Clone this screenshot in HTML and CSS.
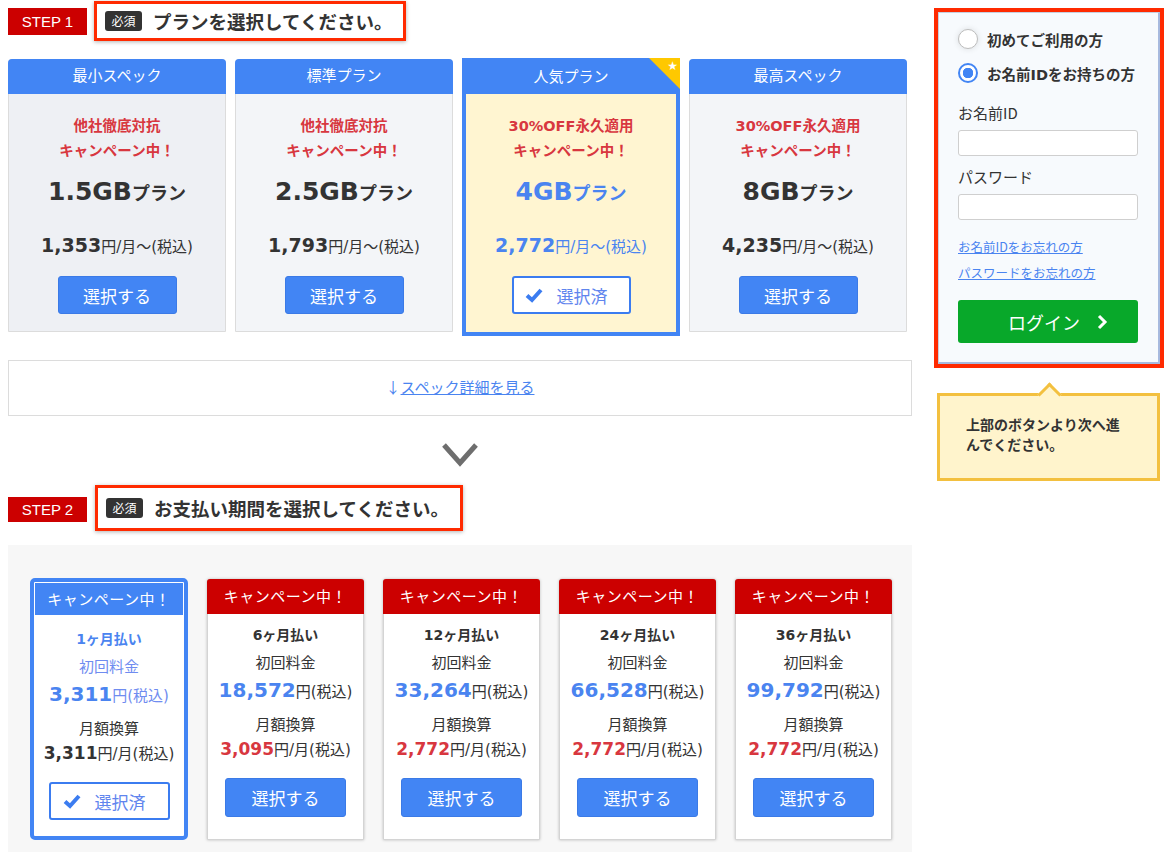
FILE: index.html
```html
<!DOCTYPE html>
<html lang="ja">
<head>
    <meta charset="UTF-8">
    <meta name="viewport" content="width=device-width, initial-scale=1.0">
    <title>プラン選択</title>
    <link rel="stylesheet" href="styles.css">
</head>
<body>
<div class="page">
    <div class="main">
        <!-- STEP 1 -->
        <div class="step-head">
            <div class="step-label">STEP 1</div>
            <div class="step-title"><span class="badge">必須</span>プランを選択してください。</div>
        </div>

        <div class="plans">
            <div class="plan">
                <div class="plan-head">最小スペック</div>
                <div class="plan-body">
                    <p class="plan-camp">他社徹底対抗<br>キャンペーン中！</p>
                    <p class="plan-name"><span class="gb">1.5GB</span>プラン</p>
                    <p class="plan-price"><b>1,353</b>円/月～(税込)</p>
                    <button class="btn-select">選択する</button>
                </div>
            </div>
            <div class="plan plan-dots">
                <div class="plan-head">標準プラン</div>
                <div class="plan-body">
                    <p class="plan-camp">他社徹底対抗<br>キャンペーン中！</p>
                    <p class="plan-name"><span class="gb">2.5GB</span>プラン</p>
                    <p class="plan-price"><b>1,793</b>円/月～(税込)</p>
                    <button class="btn-select">選択する</button>
                </div>
            </div>
            <div class="plan plan-active">
                <div class="plan-head">人気プラン</div>
                <div class="corner"><span>★</span></div>
                <div class="plan-body">
                    <p class="plan-camp">30%OFF永久適用<br>キャンペーン中！</p>
                    <p class="plan-name"><span class="gb">4GB</span>プラン</p>
                    <p class="plan-price"><b>2,772</b>円/月～(税込)</p>
                    <button class="btn-selected">
                        <svg width="18" height="16" viewBox="0 0 18 16"><path d="M2 8.5 L7 13 L16 3" fill="none" stroke="#3b7cf0" stroke-width="4"/></svg>
                        選択済
                    </button>
                </div>
            </div>
            <div class="plan plan-dots">
                <div class="plan-head">最高スペック</div>
                <div class="plan-body">
                    <p class="plan-camp">30%OFF永久適用<br>キャンペーン中！</p>
                    <p class="plan-name"><span class="gb">8GB</span>プラン</p>
                    <p class="plan-price"><b>4,235</b>円/月～(税込)</p>
                    <button class="btn-select">選択する</button>
                </div>
            </div>
        </div>

        <div class="spec-box">
            <a href="#" class="spec-link"><span class="arrow">↓</span><u>スペック詳細を見る</u></a>
        </div>

        <div class="next-arrow">
            <svg width="36" height="24" viewBox="0 0 36 24"><polyline points="2,2 18,20 34,2" fill="none" stroke="#6e6e6e" stroke-width="5"/></svg>
        </div>

        <!-- STEP 2 -->
        <div class="step-head step-head-2">
            <div class="step-label">STEP 2</div>
            <div class="step-title"><span class="badge">必須</span>お支払い期間を選択してください。</div>
        </div>

        <div class="terms">
            <div class="term term-active">
                <div class="term-head">キャンペーン中！</div>
                <div class="term-body">
                    <p class="term-name">1ヶ月払い</p>
                    <p class="term-label">初回料金</p>
                    <p class="term-first"><b>3,311</b>円(税込)</p>
                    <p class="term-label">月額換算</p>
                    <p class="term-month"><b>3,311</b>円/月(税込)</p>
                    <button class="btn-selected">
                        <svg width="18" height="16" viewBox="0 0 18 16"><path d="M2 8.5 L7 13 L16 3" fill="none" stroke="#3b7cf0" stroke-width="4"/></svg>
                        選択済
                    </button>
                </div>
            </div>
            <div class="term">
                <div class="term-head">キャンペーン中！</div>
                <div class="term-body">
                    <p class="term-name">6ヶ月払い</p>
                    <p class="term-label">初回料金</p>
                    <p class="term-first"><b>18,572</b>円(税込)</p>
                    <p class="term-label">月額換算</p>
                    <p class="term-month"><b>3,095</b>円/月(税込)</p>
                    <button class="btn-select">選択する</button>
                </div>
            </div>
            <div class="term">
                <div class="term-head">キャンペーン中！</div>
                <div class="term-body">
                    <p class="term-name">12ヶ月払い</p>
                    <p class="term-label">初回料金</p>
                    <p class="term-first"><b>33,264</b>円(税込)</p>
                    <p class="term-label">月額換算</p>
                    <p class="term-month"><b>2,772</b>円/月(税込)</p>
                    <button class="btn-select">選択する</button>
                </div>
            </div>
            <div class="term">
                <div class="term-head">キャンペーン中！</div>
                <div class="term-body">
                    <p class="term-name">24ヶ月払い</p>
                    <p class="term-label">初回料金</p>
                    <p class="term-first"><b>66,528</b>円(税込)</p>
                    <p class="term-label">月額換算</p>
                    <p class="term-month"><b>2,772</b>円/月(税込)</p>
                    <button class="btn-select">選択する</button>
                </div>
            </div>
            <div class="term">
                <div class="term-head">キャンペーン中！</div>
                <div class="term-body">
                    <p class="term-name">36ヶ月払い</p>
                    <p class="term-label">初回料金</p>
                    <p class="term-first"><b>99,792</b>円(税込)</p>
                    <p class="term-label">月額換算</p>
                    <p class="term-month"><b>2,772</b>円/月(税込)</p>
                    <button class="btn-select">選択する</button>
                </div>
            </div>
        </div>
    </div>

    <!-- Sidebar login -->
    <div class="side">
        <div class="login-wrap">
            <div class="login">
                <label class="radio-row"><span class="radio"></span>初めてご利用の方</label>
                <label class="radio-row"><span class="radio radio-on"></span>お名前IDをお持ちの方</label>
                <p class="field-label">お名前ID</p>
                <input type="text" class="field">
                <p class="field-label field-label-2">パスワード</p>
                <input type="password" class="field">
                <a href="#" class="forgot forgot-1">お名前IDをお忘れの方</a>
                <a href="#" class="forgot">パスワードをお忘れの方</a>
                <button class="btn-login">ログイン
                    <svg width="12" height="16" viewBox="0 0 12 16"><polyline points="3,2 9,8 3,14" fill="none" stroke="#fff" stroke-width="3"/></svg>
                </button>
            </div>
        </div>
        <div class="notice">
            <span class="notice-tip"></span>
            上部のボタンより次へ進んでください。
        </div>
    </div>
</div>
</body>
</html>
```

FILE: styles.css
```css
/* base */
body {
    margin: 0;
    font-family: "DejaVu Sans", "Noto Sans CJK JP", sans-serif;
    color: #333;
    background: #fff;
}
p {
    margin: 0;
}
.page {
    display: flex;
    padding-left: 8px;
    gap: 22px;
}
.main {
    width: 904px;
}

/* step headings */
.step-head {
    display: flex;
    align-items: center;
    padding-top: 1px;
}
.step-label {
    width: 79px;
    height: 27px;
    line-height: 27px;
    background-color: #cc0000;
    color: #fff;
    font-family: "Liberation Sans", sans-serif;
    font-size: 15px;
    text-align: center;
}
.step-title {
    display: flex;
    align-items: center;
    height: 34px;
    margin-left: 7px;
    padding: 0 11px 0 8px;
    border: 3px solid #ff2a00;
    box-shadow: 0 1px 4px rgba(0, 0, 0, 0.3);
    font-family: "Noto Sans CJK JP", sans-serif;
    font-size: 18.5px;
    font-weight: bold;
}
.badge {
    display: inline-block;
    width: 37px;
    height: 20px;
    line-height: 20px;
    margin-right: 11px;
    background-color: #333;
    color: #fff;
    border-radius: 3px;
    font-size: 12px;
    font-weight: normal;
    text-align: center;
}
.step-head-2 {
    margin-top: 17px;
}
.step-head-2 .step-label {
    height: 25px;
    line-height: 25px;
    margin-top: 3px;
}
.step-head-2 .step-title {
    height: 40px;
    margin-left: 8px;
}

/* plan cards */
.plans {
    display: grid;
    grid-template-columns: repeat(4, 218px);
    gap: 9px;
    margin-top: 18px;
    align-items: start;
}
.plan {
    position: relative;
    box-sizing: border-box;
    height: 273px;
    border: 1px solid #dcdcdc;
    border-radius: 4px 4px 0 0;
    background-color: #eef0f4;
    text-align: center;
}
.plan-dots {
    background-color: #f3f5f8;
}
.plan-head {
    height: 35px;
    line-height: 31px;
    margin: -1px -1px 0;
    background-color: #4285f4;
    color: #fff;
    border-radius: 4px 4px 0 0;
    font-family: "Noto Sans CJK JP", sans-serif;
    font-size: 15px;
}
.plan-body {
    padding-top: 20px;
}
.plan-camp {
    color: #d8373f;
    font-size: 14.5px;
    font-weight: bold;
    line-height: 25px;
}
.plan-name {
    margin-top: 10px;
    height: 36px;
    line-height: 36px;
    font-size: 18px;
    font-weight: bold;
}
.plan-name .gb {
    font-size: 25px;
}
.plan-price {
    margin-top: 22px;
    line-height: 26px;
    font-size: 15px;
}
.plan-price b {
    font-size: 19px;
}
.plan-active {
    height: 278px;
    margin-top: -1px;
    border: 4px solid #4285f4;
    border-radius: 0;
    background-color: #fff5d1;
}
.plan-active .plan-head {
    height: 32px;
    line-height: 28px;
    margin: -4px -4px 0;
    padding-top: 4px;
    border-radius: 0;
}
.plan-active .plan-name,
.plan-active .plan-price {
    color: #4a84f0;
}
.corner {
    position: absolute;
    top: -4px;
    right: -4px;
    width: 0;
    height: 0;
    border-top: 31px solid #ffc800;
    border-left: 31px solid transparent;
}
.corner span {
    position: absolute;
    top: -30px;
    right: 2px;
    color: #fff;
    font-size: 12px;
}

/* buttons */
.btn-select {
    width: 119px;
    height: 38px;
    margin-top: 16px;
    background-color: #4285f4;
    border: 1px solid #3b7ae6;
    border-radius: 3px;
    color: #fff;
    font-family: "Noto Sans CJK JP", sans-serif;
    font-size: 17px;
    cursor: pointer;
}
.btn-selected {
    display: inline-flex;
    align-items: center;
    justify-content: center;
    gap: 14px;
    box-sizing: border-box;
    width: 119px;
    height: 38px;
    margin-top: 16px;
    padding: 0 10px 0 0;
    background-color: #fff;
    border: 2px solid #3b7cf0;
    border-radius: 3px;
    color: #5f85ee;
    font-family: "Noto Sans CJK JP", sans-serif;
    font-size: 17px;
    cursor: pointer;
}

/* spec link */
.spec-box {
    box-sizing: border-box;
    height: 56px;
    margin-top: 24px;
    border: 1px solid #dcdcdc;
    text-align: center;
    line-height: 52px;
}
.spec-link {
    color: #4a84f0;
    font-family: "Noto Sans CJK JP", sans-serif;
    font-size: 15px;
    text-decoration: none;
}
.next-arrow {
    margin-top: 27px;
    height: 24px;
    text-align: center;
}

/* payment terms */
.terms {
    display: flex;
    gap: 19px;
    margin-top: 14px;
    padding: 34px 22px 12px;
    background-color: #f7f7f7;
}
.term {
    flex: none;
    width: 157px;
    box-sizing: border-box;
    height: 261px;
    background-color: #fff;
    border: 1px solid #d4d4d4;
    border-radius: 3px 3px 0 0;
    box-shadow: 0 0 3px rgba(0, 0, 0, 0.25);
    text-align: center;
}
.term-head {
    height: 35px;
    line-height: 34px;
    margin: -1px -1px 0;
    background-color: #cc0000;
    border-radius: 3px 3px 0 0;
    color: #fff;
    font-family: "Noto Sans CJK JP", sans-serif;
    font-size: 15px;
    letter-spacing: 0.5px;
}
.term-body {
    padding-top: 9px;
}
.term-name {
    line-height: 24px;
    font-size: 14px;
    font-weight: bold;
}
.term-label {
    margin-top: 4px;
    line-height: 24px;
    font-size: 15px;
}
.term-first {
    margin-top: 1px;
    line-height: 28px;
    font-size: 15px;
}
.term-first b {
    color: #4a84f0;
    font-size: 20px;
}
.term-first + .term-label {
    margin-top: 7px;
}
.term-month {
    line-height: 24px;
    font-size: 15px;
}
.term-month b {
    color: #d8373f;
    font-size: 17px;
}
.term .btn-select {
    width: 121px;
    height: 39px;
    margin-top: 16px;
}
.term-active {
    width: 158px;
    height: 262px;
    margin-top: -1px;
    padding: 1px;
    border: 4px solid #4285f4;
    border-radius: 5px;
    box-shadow: none;
}
.term-active .term-head {
    height: 32px;
    line-height: 31px;
    margin: 0;
    border-radius: 0;
    background-color: #4285f4;
}
.term-active .term-body {
    padding-top: 12px;
}
.term-active .term-name,
.term-active .term-first b {
    color: #4a84f0;
}
.term-active .term-name + .term-label,
.term-active .term-first {
    color: #6f8cf0;
}
.term-active .term-month b {
    color: #333;
}
.term-active .btn-selected {
    width: 121px;
    height: 38px;
    margin-top: 16px;
}

/* sidebar */
.side {
    width: 230px;
}
.login-wrap {
    margin-top: 8px;
    border: 4px solid #ff2a00;
}
.login {
    padding: 16px 20px 19px 19px;
    background-color: #f7fafd;
    border: 1px solid #c6cfdf;
    border-right: 2px solid #a7b9de;
    border-bottom: 2px solid #a7b9de;
}
.radio-row {
    display: flex;
    align-items: center;
    gap: 9px;
    height: 20px;
    font-size: 14.5px;
    font-weight: bold;
    cursor: pointer;
}
.radio-row + .radio-row {
    margin-top: 14px;
}
.radio {
    box-sizing: border-box;
    width: 20px;
    height: 20px;
    border: 1px solid #bdbdbd;
    border-radius: 50%;
    background-color: #fff;
    box-shadow: 0 0 6px rgba(0, 0, 0, 0.12);
}
.radio-on {
    border: 2px solid #4285f4;
    box-shadow: none;
    background: radial-gradient(circle, #4285f4 0 5px, #fff 5.5px);
}
.field-label {
    margin-top: 19px;
    line-height: 22px;
    font-family: "Noto Sans CJK JP", sans-serif;
    font-size: 15px;
}
.field-label-2 {
    margin-top: 10px;
}
.field {
    display: block;
    box-sizing: border-box;
    width: 180px;
    height: 26px;
    margin-top: 6px;
    border: 1px solid #cfcfcf;
    border-radius: 3px;
    background-color: #fff;
}
.forgot {
    display: block;
    margin-top: 6px;
    line-height: 20px;
    color: #4a84f0;
    font-family: "Noto Sans CJK JP", sans-serif;
    font-size: 12.5px;
}
.forgot-1 {
    margin-top: 17px;
}
.btn-login {
    display: flex;
    align-items: center;
    justify-content: center;
    gap: 16px;
    width: 180px;
    height: 43px;
    margin-top: 17px;
    padding-left: 26px;
    background-color: #08a82a;
    border: none;
    border-radius: 3px;
    color: #fff;
    font-family: "Noto Sans CJK JP", sans-serif;
    font-size: 18px;
    cursor: pointer;
}
.notice {
    position: relative;
    box-sizing: border-box;
    width: 223px;
    height: 88px;
    margin: 25px 0 0 3px;
    padding: 19px 26px 0 26px;
    background-color: #fff4cc;
    border: 3px solid #f3c03f;
    font-size: 14px;
    font-weight: bold;
    line-height: 20px;
}
.notice-tip {
    position: absolute;
    top: -10px;
    left: 101px;
    width: 14px;
    height: 14px;
    background-color: #fff4cc;
    border-top: 3px solid #f3c03f;
    border-left: 3px solid #f3c03f;
    transform: rotate(45deg);
}
```
